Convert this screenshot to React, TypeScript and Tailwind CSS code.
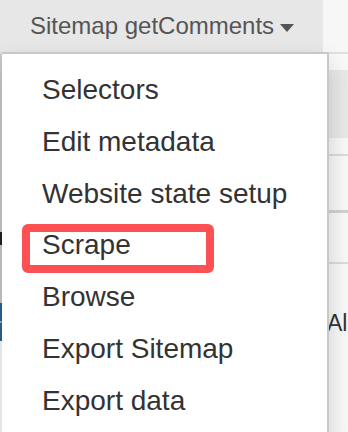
const items = [
  "Selectors",
  "Edit metadata",
  "Website state setup",
  "Scrape",
  "Browse",
  "Export Sitemap",
  "Export data",
];

export default function App() {
  return (
    <div
      className="relative h-[432px] w-[348px] overflow-hidden bg-[#f8f8f8]"
      style={{ fontFamily: '"Liberation Sans", Arial, sans-serif' }}
    >
      {/* navbar */}
      <div className="flex h-[52px]">
        <div className="flex w-[323px] items-center bg-[#e7e7e7] pl-[30px] text-[24px] leading-[52px] text-[#555]">
          <span>Sitemap getComments</span>
          <svg width="14" height="8" viewBox="0 0 14 8" className="ml-[6px] mt-[4px]">
            <path d="M0 0H14L7 8Z" fill="#555" />
          </svg>
        </div>
        <div className="flex-1 bg-[#f7f7f7]" />
      </div>

      {/* page behind the menu */}
      <div className="flex flex-col">
        <div className="h-[2px] bg-[#e0e0e0]" />
        <div className="h-[16px] bg-[#f9f9f9]" />
        <div className="h-[68px] bg-[#e9e9e9]" />
        <div className="h-[16px] bg-[#f9f9f9]" />
        <div className="h-[2px] bg-[#dcdcdc]" />
        <div className="h-[54px] bg-[#f9f9f9]" />
        <div className="h-[3px] bg-[#d2d2d2]" />
        <div className="h-[49px] bg-[#f9f9f9]" />
        <div className="h-[2px] bg-[#dcdcdc]" />
        <div className="h-[168px] bg-[#f9f9f9] pl-[327px] pt-[44px] text-[23px] leading-[30px] text-[#333]">
          Al
        </div>
      </div>

      {/* left edge of page content */}
      <div className="absolute left-0 top-[54px] flex w-[2px] flex-col bg-[#c9c9c9]">
        <div className="h-[178px]" />
        <div className="h-[13px] bg-[#222]" />
        <div className="h-[58px]" />
        <div className="h-[18px] bg-[#2a6496]" />
        <div className="h-[2px] bg-[#8aa9c4]" />
        <div className="h-[18px] bg-[#2a6496]" />
      </div>

      {/* dropdown menu */}
      <ul className="absolute left-[2px] top-[52px] w-[327px] border-2 border-l-0 border-[#c8c8c8] bg-white pb-[10px] pt-[10px] shadow-[0_12px_24px_rgba(0,0,0,0.175)]">
        {items.map((label) => (
          <li
            key={label}
            className="h-[51.75px] whitespace-nowrap pl-[40px] text-[28px] leading-[51.75px] text-[#333]"
          >
            {label}
          </li>
        ))}
      </ul>

      {/* highlight around Scrape */}
      <div className="absolute left-[22px] top-[224px] h-[49px] w-[192px] rounded-[6px] border-[8px] border-[#fc5053]" />
    </div>
  );
}
